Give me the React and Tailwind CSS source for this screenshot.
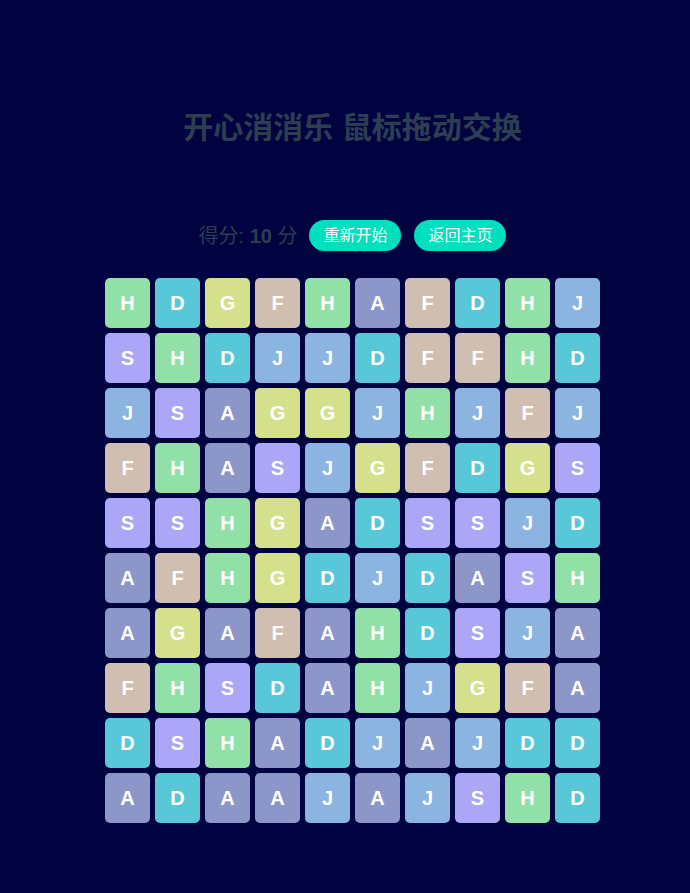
import React from "react";

const BOARD = [
	"HDGFHAFDHJ",
	"SHDJJDFFHD",
	"JSAGGJHJFJ",
	"FHASJGFDGS",
	"SSHGADSSJD",
	"AFHGDJDASH",
	"AGAFAHDSJA",
	"FHSDAHJGFA",
	"DSHADJAJDD",
	"ADAAJAJSHD",
];

// tile colour per letter
const COLORS = {
	H: "bg-[#90e0a8]",
	D: "bg-[#58c8d8]",
	G: "bg-[#d4e08c]",
	F: "bg-[#d0beb0]",
	A: "bg-[#8c96c8]",
	J: "bg-[#8cb4e0]",
	S: "bg-[#aca6f6]",
};

function Tile({ letter }) {
	return (
		<div
			className={`w-[45px] h-[50px] rounded-[5px] flex items-center justify-center text-white text-[20px] font-bold ${COLORS[letter]}`}
		>
			{letter}
		</div>
	);
}

export default function App() {
	return (
		<div
			className="min-h-[893px] bg-[#000340] pl-[15px] text-[#2c3e50]"
			style={{ fontFamily: '"Liberation Sans", "Noto Sans CJK SC", sans-serif' }}
		>
			<div className="flex flex-col items-center pt-[105px]">
				<h1 className="text-[30px] leading-[45px] font-bold">开心消消乐 鼠标拖动交换</h1>

				<div className="flex items-center mt-[70px]">
					<span className="text-[20px]">
						得分: <b>10</b> 分
					</span>
					<button className="ml-[12px] h-[31px] px-[14px] rounded-full bg-[#00e0be] text-white text-[16px]">
						重新开始
					</button>
					<button className="ml-[13px] h-[31px] px-[14px] rounded-full bg-[#00e0be] text-white text-[16px]">
						返回主页
					</button>
				</div>

				<div className="grid grid-cols-[repeat(10,45px)] gap-[5px] mt-[27px]">
					{BOARD.map((row, r) =>
						row.split("").map((ch, c) => <Tile key={r + "-" + c} letter={ch} />)
					)}
				</div>
			</div>
		</div>
	);
}
